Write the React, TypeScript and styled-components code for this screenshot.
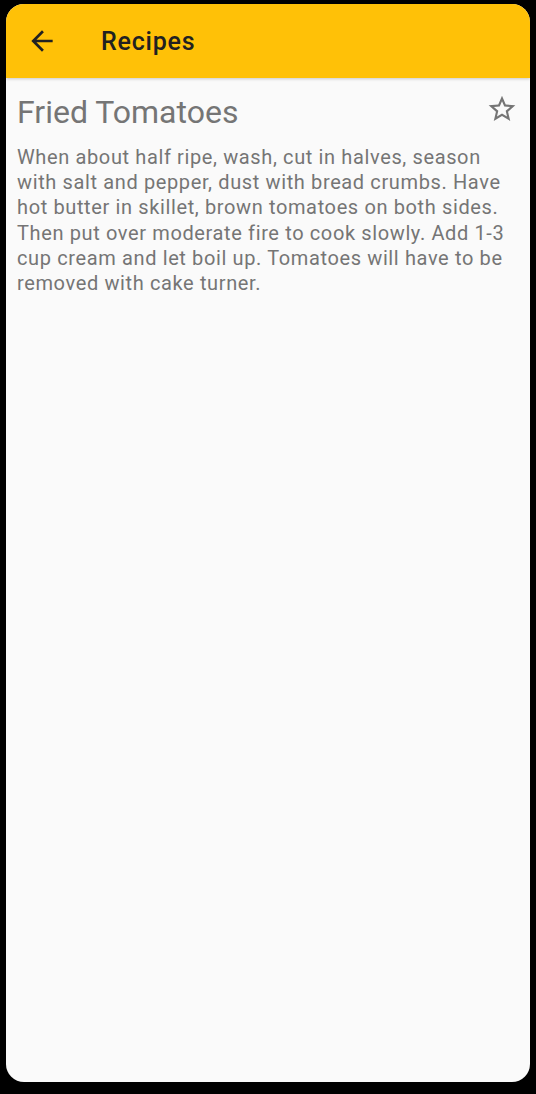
import React from 'react';
import styled, { createGlobalStyle } from 'styled-components';

const GlobalStyle = createGlobalStyle`
  html, body {
    margin: 0;
    padding: 0;
    background: #000000;
  }
  body {
    font-family: Roboto, "Noto Sans", sans-serif;
  }
`;

const Screen = styled.div`
  box-sizing: border-box;
  width: 536px;
  height: 1094px;
  padding: 4px 6px 12px 6px;
  background: #000000;
  display: flex;
`;

const Phone = styled.div`
  flex: 1;
  display: flex;
  flex-direction: column;
  background: #fafafa;
  border-radius: 18px;
  overflow: hidden;
`;

const AppBar = styled.header`
  height: 74px;
  flex: none;
  display: flex;
  align-items: center;
  padding: 0 0 0 20px;
  background: #ffc107;
  box-shadow: 0 1px 3px rgba(0, 0, 0, 0.2);
  position: relative;
  z-index: 1;
`;

const IconButton = styled.button<{ $color?: string }>`
  width: 32px;
  height: 32px;
  flex: none;
  padding: 0;
  border: none;
  background: transparent;
  display: flex;
  align-items: center;
  justify-content: center;
  color: ${(p) => p.$color || '#212121'};
  cursor: pointer;
`;

const BarTitle = styled.h1`
  margin: 0 0 0 43px;
  font-size: 25px;
  font-weight: 500;
  letter-spacing: 0.8px;
  color: #212121;
`;

const Content = styled.main`
  flex: 1;
  padding: 15px 12px 0 11px;
`;

const TitleRow = styled.div`
  display: flex;
  align-items: flex-start;
  justify-content: space-between;
`;

const RecipeTitle = styled.h2`
  margin: 0;
  font-size: 32px;
  font-weight: 400;
  color: #757575;
`;

const Description = styled.p`
  margin: 14px 0 0 0;
  font-size: 20px;
  line-height: 25.2px;
  letter-spacing: 0.625px;
  color: #757575;
`;

const BackArrow = () => (
  <svg width="32" height="32" viewBox="0 0 24 24" fill="currentColor">
    <path d="M20 11H7.83l5.59-5.59L12 4l-8 8 8 8 1.41-1.41L7.83 13H20v-2z" />
  </svg>
);

const StarOutline = () => (
  <svg width="32" height="32" viewBox="0 0 24 24" fill="currentColor">
    <path d="M22 9.24l-7.19-.62L12 2 9.19 8.63 2 9.24l5.46 4.73L5.82 21 12 17.27 18.18 21l-1.63-7.03L22 9.24zM12 15.4l-3.76 2.27 1-4.28-3.32-2.88 4.38-.38L12 6.1l1.71 4.04 4.38.38-3.32 2.88 1 4.28L12 15.4z" />
  </svg>
);

export default function App() {
  return (
    <>
      <GlobalStyle />
      <Screen>
        <Phone>
          <AppBar>
            <IconButton aria-label="Back">
              <BackArrow />
            </IconButton>
            <BarTitle>Recipes</BarTitle>
          </AppBar>
          <Content>
            <TitleRow>
              <RecipeTitle>Fried Tomatoes</RecipeTitle>
              <IconButton $color="#757575" aria-label="Favorite">
                <StarOutline />
              </IconButton>
            </TitleRow>
            <Description>
              When about half ripe, wash, cut in halves, season with salt and pepper, dust with bread
              crumbs. Have hot butter in skillet, brown tomatoes on both sides. Then put over moderate
              fire to cook slowly. Add 1-3 cup cream and let boil up. Tomatoes will have to be removed
              with cake turner.
            </Description>
          </Content>
        </Phone>
      </Screen>
    </>
  );
}
